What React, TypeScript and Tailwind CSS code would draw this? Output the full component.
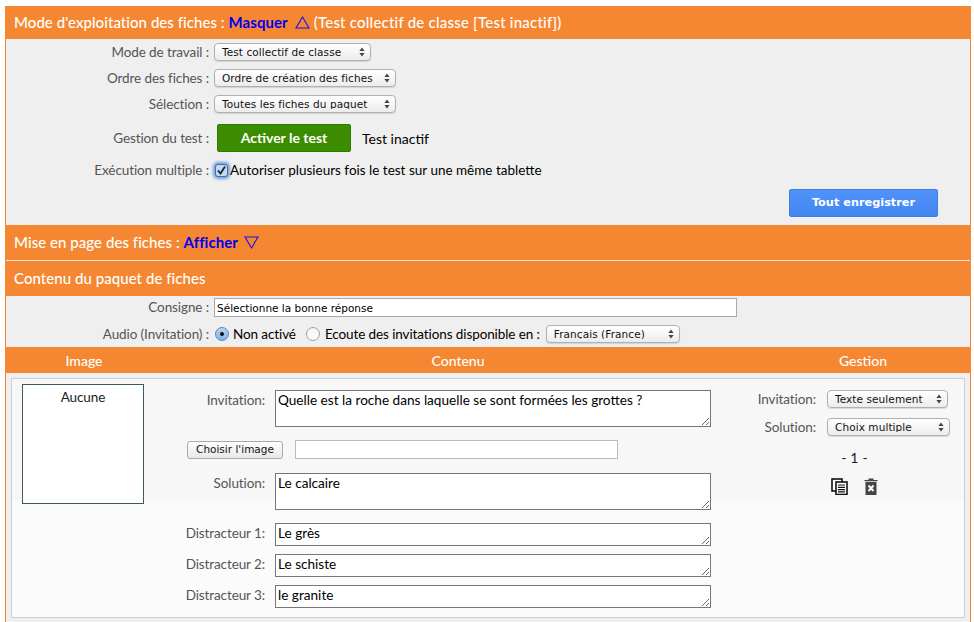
const bodyFont = "font-['Lato','Open_Sans',sans-serif]";
const ctrlFont = "font-['DejaVu_Sans',sans-serif]";

function Arrows() {
  return (
    <svg width="6" height="10" viewBox="0 0 6 10" className="absolute right-[6px] top-1/2 -translate-y-1/2 pointer-events-none">
      <path d="M3 0.5 L5.6 4 H0.4 Z M3 9.5 L5.6 6 H0.4 Z" fill="#444" />
    </svg>
  );
}

function Select({ value, className }: { value: string; className: string }) {
  return (
    <div className={`relative h-[18px] shrink-0 ${className}`}>
      <select
        defaultValue={value}
        className={`${ctrlFont} block appearance-none w-full h-full rounded-[4px] border border-[#b0b0b0] bg-gradient-to-b from-white to-[#ececec] pl-[7px] pr-4 text-[10.5px] tracking-[0.08px] leading-none text-[#111] shadow-[0_1px_1px_rgba(0,0,0,0.12)]`}
      >
        <option>{value}</option>
      </select>
      <Arrows />
    </div>
  );
}

function Triangle({ down = false }: { down?: boolean }) {
  return (
    <svg width="15" height="13" viewBox="0 0 15 13" className="shrink-0">
      <path d={down ? 'M1 1 H14 L7.5 12 Z' : 'M7.5 1 L14 12 H1 Z'} fill="none" stroke="#1414e6" strokeWidth="1.1" />
    </svg>
  );
}

function Header({ children, className = '' }: { children: React.ReactNode; className?: string }) {
  return (
    <div className={`flex items-center pl-[8px] bg-[#f58733] text-white text-[15px] tracking-[0.05px] font-medium whitespace-pre ${className}`}>
      {children}
    </div>
  );
}

const labelClass = 'text-[#555] text-[13.5px] tracking-[-0.1px] whitespace-pre';

function FormRow({ label, children, className = '' }: { label: string; children: React.ReactNode; className?: string }) {
  return (
    <div className={`flex items-center ${className}`}>
      <span className={`w-[208px] shrink-0 pr-[5px] text-right ${labelClass}`}>{label}</span>
      {children}
    </div>
  );
}

function FieldRow({ label, value, className }: { label: string; value: string; className: string }) {
  return (
    <div className={`flex ${className}`}>
      <span className={`w-[122px] shrink-0 pr-[10px] text-right leading-[20px] ${labelClass}`}>{label}</span>
      <textarea
        defaultValue={value}
        className="w-[436px] h-full border border-[#777] bg-white px-[2px] py-0 text-[13.6px] leading-[18px] text-black outline-none"
      />
    </div>
  );
}

function CopyIcon() {
  return (
    <svg width="17" height="17" viewBox="0 0 17 17">
      <rect x="1" y="1" width="10" height="12" fill="#fff" stroke="#111" strokeWidth="1.6" />
      <rect x="5" y="4" width="11" height="12.5" fill="#fff" stroke="#111" strokeWidth="1.6" />
      <path d="M7 7 H14 M7 9.3 H14 M7 11.6 H14 M7 13.9 H14" stroke="#111" strokeWidth="1.2" />
    </svg>
  );
}

function TrashIcon() {
  return (
    <svg width="14" height="17" viewBox="0 0 14 17">
      <path d="M0.5 2 H13.5 V3.2 H0.5 Z M4.5 0.4 H9.5 V2 H4.5 Z" fill="#444" />
      <rect x="1.5" y="4" width="11" height="13" fill="#444" />
      <path d="M4.5 7.5 L9.5 13 M9.5 7.5 L4.5 13" stroke="#fff" strokeWidth="2" />
    </svg>
  );
}

export default function App() {
  return (
    <div className={`${bodyFont} w-[974px] h-[622px] overflow-hidden bg-white pt-[6px] pl-[5px] pr-[3px]`}>
      <div className="h-[616px] border-x border-[#f58733] bg-[#efefef]">
        <Header className="h-[33px]">
          Mode d'exploitation des fiches : <span className="font-bold text-[#0000f0] mr-[7px]">Masquer</span>
          <Triangle />
          <span className="ml-[4px] tracking-[0.22px]">(Test collectif de classe [Test inactif])</span>
        </Header>

        <div className="h-[186px] pt-[4px]">
          <FormRow label="Mode de travail :" className="h-[18px]">
            <Select value="Test collectif de classe" className="w-[157px]" />
          </FormRow>
          <FormRow label="Ordre des fiches :" className="h-[18px] mt-[8px]">
            <Select value="Ordre de création des fiches" className="w-[182px]" />
          </FormRow>
          <FormRow label="Sélection :" className="h-[18px] mt-[8px]">
            <Select value="Toutes les fiches du paquet" className="w-[182px]" />
          </FormRow>
          <FormRow label="Gestion du test :" className="h-[28px] mt-[11px]">
            <button className="ml-[3px] w-[134px] h-[28px] pb-[2px] rounded-[2px] border border-[#2f7a00] bg-[#3c8c00] text-white text-[14px] font-bold">
              Activer le test
            </button>
            <span className="ml-[11px] text-[14px] text-black">Test inactif</span>
          </FormRow>
          <FormRow label="Exécution multiple :" className="h-[18px] mt-[9px]">
            <span className="flex items-center justify-center w-[13px] h-[13px] ml-[1px] rounded-[3px] border border-[#4a6f9c] bg-[#c4d8ee] shadow-[0_0_3px_2px_rgba(70,130,220,0.75)]">
              <svg width="11" height="11" viewBox="0 0 11 11">
                <path d="M2 5.5 L4.5 8.5 L9 1.5" fill="none" stroke="#15243a" strokeWidth="1.8" />
              </svg>
            </span>
            <span className="ml-[2px] text-[13.5px] text-black whitespace-pre">Autoriser plusieurs fois le test sur une même tablette</span>
          </FormRow>
          <div className="flex justify-end pr-[32px] mt-[10px]">
            <button className={`${ctrlFont} w-[149px] h-[28px] rounded-[2px] border border-[#3f7de0] bg-gradient-to-b from-[#4f93fb] to-[#4486f0] text-white text-[11.3px] font-bold`}>
              Tout enregistrer
            </button>
          </div>
        </div>

        <Header className="h-[35px]">
          Mise en page des fiches : <span className="font-bold text-[#0000f0] mr-[6px]">Afficher</span>
          <Triangle down />
        </Header>
        <div className="h-px bg-[#fbe3d0]" />
        <Header className="h-[35px]">Contenu du paquet de fiches</Header>

        <div className="h-[51px] pt-[2px]">
          <div className="flex items-center h-[19px]">
            <span className={`w-[208px] shrink-0 pr-[5px] text-right ${labelClass}`}>Consigne :</span>
            <input
              defaultValue="Sélectionne la bonne réponse"
              className={`${ctrlFont} w-[523px] h-[19px] border border-[#aaa] bg-white px-[2px] text-[10.5px] text-black outline-none`}
            />
          </div>
          <div className="flex items-center h-[18px] mt-[8px] text-[13.5px] tracking-[-0.1px]">
            <span className={`w-[208px] shrink-0 pr-[5px] text-right ${labelClass}`}>Audio (Invitation) :</span>
            <span className="ml-px flex items-center justify-center w-[14px] h-[14px] rounded-full border border-[#5f86b8] bg-gradient-to-b from-[#b9d2f2] to-[#7fb0ee]">
              <span className="w-[4px] h-[4px] rounded-full bg-[#111]" />
            </span>
            <span className="ml-[4px] text-black">Non activé</span>
            <span className="ml-[10px] w-[14px] h-[14px] rounded-full border border-[#a0a0a0] bg-gradient-to-b from-[#f4f4f4] to-white" />
            <span className="ml-[5px] text-black whitespace-pre">Ecoute des invitations disponible en :</span>
            <Select value="Français (France)" className="ml-[6px] w-[134px]" />
          </div>
        </div>

        <div className="flex h-[26px] items-center bg-[#f58733] text-white text-[14px] font-medium">
          <span className="w-[156px] text-center">Image</span>
          <span className="w-[592px] text-center">Contenu</span>
          <span className="w-[120px] ml-[49px] text-center">Gestion</span>
        </div>

        <div className="pl-[5px] pr-[5px] pt-[5px]">
          <div className="flex h-[240px] border border-[#cfcfcf] bg-[linear-gradient(#f7f7f7_0,#f7f7f7_119px,#fbfbfb_124px)]">
            <div className="w-[122px] h-[120px] ml-[10px] mt-[5px] shrink-0 border border-[#3c5a5f] bg-white pt-[2px] text-center text-[13.5px] tracking-[-0.1px] text-[#222]">
              Aucune
            </div>
            <div className="w-[558px] shrink-0 ml-[9px] pt-[11px]">
              <FieldRow label="Invitation:" value="Quelle est la roche dans laquelle se sont formées les grottes ?" className="h-[37px]" />
              <div className="flex items-end h-[19px] mt-[13px] ml-[34px]">
                <button className={`${ctrlFont} w-[96px] h-[18px] rounded-[3px] border border-[#aaa] bg-gradient-to-b from-white to-[#e8e8e8] text-[10.5px] text-[#111]`}>
                  Choisir l'image
                </button>
                <input className="ml-[12px] w-[323px] h-[19px] border border-[#bbb] bg-white outline-none" />
              </div>
              <FieldRow label="Solution:" value="Le calcaire" className="h-[37px] mt-[14px]" />
              <FieldRow label="Distracteur 1:" value="Le grès" className="h-[23px] mt-[13px]" />
              <FieldRow label="Distracteur 2:" value="Le schiste" className="h-[23px] mt-[8px]" />
              <FieldRow label="Distracteur 3:" value="le granite" className="h-[23px] mt-[8px]" />
            </div>
            <div className="flex-1 flex flex-col items-center pt-[11px]">
              <div className={`flex items-center h-[18px] self-end pr-[16px] ${labelClass}`}>
                <span className="mr-[11px]">Invitation:</span>
                <Select value="Texte seulement" className="w-[121px]" />
              </div>
              <div className={`flex items-center h-[18px] mt-[10px] self-end pr-[14px] ${labelClass}`}>
                <span className="mr-[11px]">Solution:</span>
                <Select value="Choix multiple" className="w-[123px]" />
              </div>
              <div className="mt-[11px] text-[14px] tracking-[0.2px] text-[#222] ml-[34px]">- 1 -</div>
              <div className="flex items-center gap-[16px] mt-[10px] ml-[34px]">
                <CopyIcon />
                <TrashIcon />
              </div>
            </div>
          </div>
        </div>
      </div>
    </div>
  );
}
